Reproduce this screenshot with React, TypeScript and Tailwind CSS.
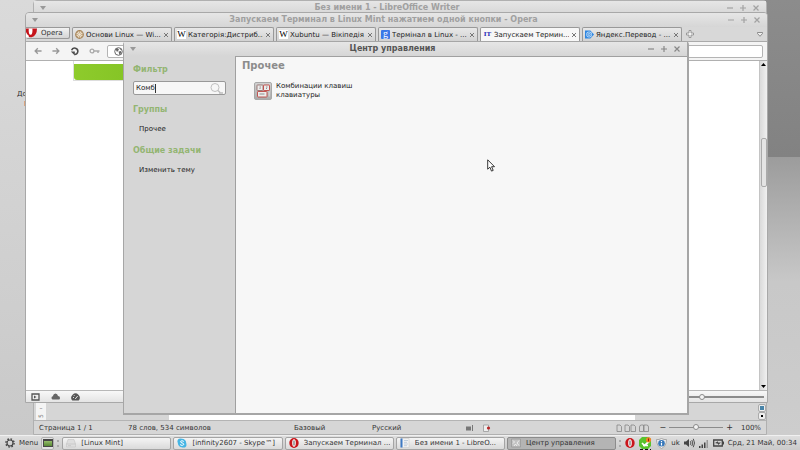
import React, { useState } from "react";

const thumb =
    "appearance-none bg-transparent [&::-webkit-slider-runnable-track]:bg-[#8c8c8c] [&::-webkit-slider-thumb]:appearance-none [&::-webkit-slider-thumb]:size-[6px] [&::-webkit-slider-thumb]:rounded-full [&::-webkit-slider-thumb]:border [&::-webkit-slider-thumb]:border-[#8a8a8a] [&::-webkit-slider-thumb]:bg-[#f4f4f4]";

const WikiIcon = () => (
    <span className="size-[9px] shrink-0 bg-white text-center font-['Liberation_Serif',serif] text-[9px] leading-[9px] text-black">W</span>
);

const GlobeIcon = () => (
    <svg viewBox="0 0 10 10" className="size-[9px] shrink-0">
        <circle cx="5" cy="5" r="4.2" fill="#e9dcc6" stroke="#a8865a" strokeWidth="1.4" />
        <path d="M5 1v8M1 5h8M2.2 2.2l5.6 5.6M7.8 2.2L2.2 7.8" stroke="#b59469" strokeWidth=".7" />
        <circle cx="5" cy="5" r="1.4" fill="#f1e8d8" />
    </svg>
);

const GoogleIcon = () => (
    <span className="size-[9px] shrink-0 rounded-[1px] bg-[#3b78e7] text-center font-['Liberation_Serif',serif] text-[10px] leading-[7px] text-white">g</span>
);

const ItIcon = () => (
    <span className="w-[9px] shrink-0 text-center font-['Liberation_Serif',serif] text-[7px] leading-[9px] font-bold text-[#2222b4]">IT</span>
);

const YandexIcon = () => (
    <svg viewBox="0 0 10 10" className="size-[9px] shrink-0">
        <path d="M0 .5h6L10 5 6 9.5H0z" fill="#2f86e0" />
        <circle cx="4.6" cy="5" r="3.2" fill="#bcdcf8" />
        <circle cx="4.6" cy="5" r="2" fill="none" stroke="#3a8be0" strokeWidth=".9" />
        <circle cx="4.6" cy="5" r=".7" fill="#3a8be0" />
    </svg>
);

const OperaIcon = () => (
    <svg viewBox="0 0 10 10" className="size-[10px] shrink-0">
        <ellipse cx="5" cy="5" rx="4.7" ry="4.9" fill="#c9151b" />
        <ellipse cx="5" cy="5" rx="1.8" ry="3.7" fill="#fff" />
        <path d="M4.5 2.5h1v5h-1z" fill="#555" />
    </svg>
);

const DriveIcon = () => (
    <svg viewBox="0 0 10 10" className="size-[10px] shrink-0">
        <path d="M2 1.5h6L9.5 6v3h-9V6z" fill="#dedede" stroke="#c4c4c4" strokeWidth=".6" />
        <path d="M.5 6h9M2 7.6h3" stroke="#bcbcbc" strokeWidth=".6" />
    </svg>
);

const SkypeIcon = () => (
    <svg viewBox="0 0 10 10" className="size-[10px] shrink-0">
        <circle cx="3.3" cy="3.3" r="2.8" fill="#45b5e4" />
        <circle cx="6.7" cy="6.7" r="2.8" fill="#45b5e4" />
        <circle cx="5" cy="5" r="4.2" fill="#45b5e4" />
        <path d="M6.8 3.5C6 2.5 3.5 2.5 3.5 3.8S6.8 4.8 6.8 6.2 4 7.8 3.1 6.5" fill="none" stroke="#fff" strokeWidth="1" />
    </svg>
);

const WriterIcon = () => (
    <svg viewBox="0 0 10 10" className="size-[10px] shrink-0">
        <path d="M1 .5h8v9H1z" fill="#f2f2f2" stroke="#c4c4c4" strokeWidth=".5" />
        <path d="M.5.5h2v9h-2z" fill="#3d79c4" />
        <path d="M4 2.5h4M4 4.3h3M4 6h4M4 7.7h3" stroke="#9db4cc" strokeWidth=".6" />
    </svg>
);

const CenterIcon = () => (
    <svg viewBox="0 0 10 10" className="size-[10px] shrink-0">
        <path d="M.5 1h9v8h-9z" fill="#c2c2c2" stroke="#979797" strokeWidth=".7" />
        <path d="M2 2.5l1.5 1.5L2 5.5M8 2.5L6 5l2 2.5M3 8l1.5-2L6 8" fill="none" stroke="#f2f2f2" strokeWidth=".9" />
    </svg>
);

const KeyboardIcon = () => (
    <svg viewBox="0 0 18 18" className="size-[18px] shrink-0">
        <defs>
            <linearGradient id="kb" x1="0" y1="0" x2="0" y2="1">
                <stop offset="0" stopColor="#d2d2d2" />
                <stop offset="1" stopColor="#aaa" />
            </linearGradient>
        </defs>
        <rect x=".5" y=".5" width="17" height="17" rx="1.5" fill="url(#kb)" stroke="#a8a8a8" />
        <g fill="#ededed" strokeWidth=".9">
            <rect x="3" y="3" width="6" height="5.5" rx=".6" stroke="#96706e" />
            <rect x="9.5" y="3" width="6" height="5.5" rx=".6" stroke="#bd4542" />
            <rect x="3.5" y="9.5" width="9.5" height="5.5" rx=".6" stroke="#bd4542" />
        </g>
        <path d="M5.5 5h1.5M5.5 6.5h1M12 5h1.5M12 6.5h1M5.5 12h5" stroke="#777" strokeWidth=".8" />
        <path d="M15.2 9.5v5" stroke="#d9d9d9" />
    </svg>
);

const TitleBar = ({ title, active }: { title: string; active?: boolean }) => (
    <header className={`flex h-[14px] shrink-0 items-center bg-linear-to-b from-[#e6e6e6] to-[#d6d6d6] px-[6px] text-[8px] leading-[12px] font-bold ${active ? "text-[#555]" : "text-[#a0a0a0]"}`}>
        <button aria-label="Меню окна" className="flex w-[8px] shrink-0">
            <svg viewBox="0 0 6 4" className="h-[4px] w-[6px]"><path d="M0 0h6L3 4z" fill="#999" /></svg>
        </button>
        <h1 className="flex-1 truncate text-center">{title}</h1>
        <div className="flex shrink-0 gap-[5px]">
            {["M1 4h6", "M1 4h6M4 1v6", "M1.5 1.5l5 5M6.5 1.5l-5 5"].map((d, i) => (
                <button key={d} aria-label={["Свернуть", "Развернуть", "Закрыть"][i]} className="size-[8px]">
                    <svg viewBox="0 0 8 8" className="size-[8px]"><path d={d} stroke={active ? "#888" : "#a2a2a2"} strokeWidth="1.2" /></svg>
                </button>
            ))}
        </div>
    </header>
);

const tabs = [
    { title: "Основи Linux — Wi...", icon: <GlobeIcon /> },
    { title: "Категорія:Дистриб...", icon: <WikiIcon /> },
    { title: "Xubuntu — Вікіпедія", icon: <WikiIcon /> },
    { title: "Термінал в Linux - ...", icon: <GoogleIcon /> },
    { title: "Запускаем Термин...", icon: <ItIcon />, active: true },
    { title: "Яндекс.Перевод - ...", icon: <YandexIcon /> },
];

const tasks = [
    { title: "[Linux Mint]", icon: <DriveIcon /> },
    { title: "[infinity2607 - Skype™]", icon: <SkypeIcon /> },
    { title: "Запускаем Терминал ...", icon: <OperaIcon /> },
    { title: "Без имени 1 - LibreO...", icon: <WriterIcon /> },
    { title: "Центр управления", icon: <CenterIcon />, active: true },
];

const WriterWindow = () => (
    <section className="absolute top-0 right-[33px] bottom-0 left-[33px] flex flex-col rounded-t-[4px] border border-[#b0b0b0] bg-[#d6d6d6]">
        <TitleBar title="Без имени 1 - LibreOffice Writer" />
        <div className="flex flex-1 pl-[2px]">
            <div className="flex w-[10px] flex-col items-center justify-end bg-[#f4f4f4] text-[6px] leading-[8px] text-[#666]">
                <span>–</span>
                <span className="h-[8px] -rotate-90">5</span>
            </div>
            <div className="flex flex-1 justify-center">
                <div className="w-[466px] bg-white" />
            </div>
            <div className="flex w-[8px] flex-col items-center justify-end">
                <button aria-label="Навигация" className="flex size-[8px] items-center justify-center rounded-[2px] border border-[#aaa] bg-[#eee]"><span className="size-[4px] bg-[#4984a8]" /></button>
                <button aria-label="Следующая страница" className="flex size-[8px] items-center justify-center rounded-[2px] border border-[#aaa] bg-[#eee]"><span className="size-[2px] bg-black" /></button>
            </div>
        </div>
        <footer className="flex h-[14px] shrink-0 items-center border-t border-[#b4b4b4] pr-[5px] pl-[5px] text-[7px] leading-[10px] text-[#333]">
            <span className="w-[89px] shrink-0">Страница 1 / 1</span>
            <span className="w-[166px] shrink-0">78 слов, 534 символов</span>
            <span className="w-[78px] shrink-0">Базовый</span>
            <span className="flex-1">Русский</span>
            <svg viewBox="0 0 26 8" className="mr-[125px] h-[8px] w-[26px] shrink-0">
                <path d="M1 2.5h5v4H1zM7 1h1v6H7z" fill="#777" />
                <path d="M18.5 1h5v6.5h-5z" fill="#eee" stroke="#999" strokeWidth=".8" />
                <circle cx="23.5" cy="4" r="1.6" fill="#b82828" />
            </svg>
            <svg viewBox="0 0 34 8" className="mr-[10px] h-[8px] w-[34px] shrink-0" fill="none" stroke="#858585" strokeWidth=".8">
                <path d="M1 1h3l1.500 1.500v5H1zM9 1h3l1.500 1.500v5H9zM15 1h3l1.500 1.500v5H15zM23.500 7.500V3q0-2 2-2h2v6.500zM28 1h2.500Q32.500 1 32.500 3v4.500H28z" />
            </svg>
            <button aria-label="Уменьшить" className="text-[8px]">−</button>
            <input type="range" aria-label="Масштаб" defaultValue={50} className={`${thumb} mx-[3px] h-[8px] w-[54px] [&::-webkit-slider-runnable-track]:h-px [&::-webkit-slider-thumb]:-mt-[3px]`} />
            <button aria-label="Увеличить" className="text-[8px]">+</button>
            <span className="ml-[8px]">100%</span>
        </footer>
    </section>
);

const OperaWindow = () => (
    <section className="absolute top-[12px] right-[32px] bottom-[32px] left-[25px] flex flex-col overflow-hidden rounded-t-[4px] border border-[#a8a8a8] bg-[#d6d6d6]">
        <TitleBar title="Запускаем Терминал в Linux Mint нажатием одной кнопки - Opera" />
        <nav className="flex h-[15px] shrink-0 items-end gap-[2px] border-b border-[#aaa] bg-[#d8d8d8]">
            <button className="flex h-[12px] w-[44px] shrink-0 items-center gap-[4px] self-start rounded-b-[2px] border border-l-0 border-[#999] bg-linear-to-b from-[#f2f2f2] to-[#d4d4d4] text-[7px] leading-[10px] text-[#333]">
                <svg viewBox="0 0 12 10" className="h-[10px] w-[11px] shrink-0">
                    <path d="M0 0h12q0 8-6 9.500Q1 10 0 5z" fill="#c5131a" />
                    <path d="M3 0h4q.5 7-2 7T3 0M0 4q1 3 3 4v2H0z" fill="#fff" />
                </svg>
                Opera
            </button>
            {tabs.map((tab) => (
                <div key={tab.title} className={`flex h-[14px] max-w-[100px] min-w-0 flex-1 items-center gap-[2px] rounded-t-[2px] border border-b-0 border-[#999] px-[2px] text-[7px] leading-[10px] text-[#222] ${tab.active ? "bg-[#f7f7f7]" : "bg-linear-to-b from-[#e8e8e8] to-[#d2d2d2]"}`}>
                    {tab.icon}
                    <button className="min-w-0 flex-1 overflow-hidden text-left whitespace-nowrap">{tab.title}</button>
                    <button aria-label="Закрыть вкладку" className="size-[6px] shrink-0">
                        <svg viewBox="0 0 6 6" className="size-[6px]"><path d="M1 1l4 4M5 1L1 5" stroke="#777" strokeWidth="1" /></svg>
                    </button>
                </div>
            ))}
            <button aria-label="Новая вкладка" className="mb-[3px] ml-[2px] size-[8px] shrink-0">
                <svg viewBox="0 0 8 8" className="size-[8px]"><path d="M3 .5h2V3h2.500v2H5v2.500H3V5H.5V3H3z" fill="#f4f4f4" stroke="#888" strokeWidth=".8" /></svg>
            </button>
            <button aria-label="Закрытые вкладки" className="mr-[4px] mb-[4px] ml-auto h-[5px] w-[6px] shrink-0">
                <svg viewBox="0 0 6 5" className="h-[5px] w-[6px]"><path d="M.5.5h5v1L3 4.300.5 1.500z" fill="#eee" stroke="#777" strokeWidth=".8" /></svg>
            </button>
        </nav>
        <div className="flex h-[19px] shrink-0 items-center gap-[10px] border-b border-[#b0b0b0] bg-[#f4f4f4] pr-[4px] pl-[8px]">
            <button aria-label="Назад"><svg viewBox="0 0 9 8" className="h-[8px] w-[8px]"><path d="M8.500 4H1.500M4.300 1L1.300 4l3 3" fill="none" stroke="#999" strokeWidth="1.500" /></svg></button>
            <button aria-label="Вперёд"><svg viewBox="0 0 9 8" className="h-[8px] w-[8px]"><path d="M.5 4h7M4.700 1l3 3-3 3" fill="none" stroke="#999" strokeWidth="1.500" /></svg></button>
            <button aria-label="Обновить"><svg viewBox="0 0 9 9" className="size-[9px]"><path d="M1.600 3.200A3.200 3.200 0 1 1 4.500 7.500" fill="none" stroke="#4c4c4c" strokeWidth="1.600" /><path d="M.8 4.600h4v4z" fill="#4c4c4c" /></svg></button>
            <button aria-label="Пароли"><svg viewBox="0 0 11 6" className="h-[6px] w-[11px]"><path d="M5 3h5.500M9 3v2" stroke="#aaa" strokeWidth="1.500" /><circle cx="3" cy="3" r="1.900" fill="none" stroke="#aaa" strokeWidth="1.300" /></svg></button>
            <label className="-ml-[3px] flex h-[13px] flex-1 items-center rounded-[2px] border border-[#b4b4b4] bg-white pl-[6px]">
                <svg viewBox="0 0 9 9" className="size-[9px] shrink-0"><circle cx="4.500" cy="4.500" r="3.800" fill="#fff" stroke="#666" /><path d="M1.500 2l2-.8L5 2.500 4 4l-1 1zM4.500 4.500L7 4l.5 1.500L5.500 8zM6 1.500L8 3H6.500z" fill="#666" /></svg>
                <input aria-label="Адрес" className="min-w-0 flex-1 text-[7px] outline-none" />
            </label>
        </div>
        <div className="flex min-h-0 flex-1 bg-white">
            <div className="flex-1 pl-[47px]">
                <div className="h-[20px] w-[200px] border-b border-l border-[#ddd] pt-[3px]">
                    <div className="h-[16px] rounded-b-[3px] bg-linear-to-r from-[#8ecb2c] to-[#6db310]" />
                </div>
            </div>
            <div className="flex w-[8px] flex-col items-center justify-between border-l border-[#c4c4c4] bg-linear-to-r from-[#dadada] to-[#f0f0f0] py-[2px]">
                <svg viewBox="0 0 5 3" className="h-[3px] w-[5px]"><path d="M0 3h5L2.500 0z" /></svg>
                <div className="mb-[126px] h-[49px] w-[6px] rounded-[2px] border border-[#aaa] bg-[#e4e4e4]" />
                <svg viewBox="0 0 5 3" className="h-[3px] w-[5px]"><path d="M0 0h5L2.500 3z" /></svg>
            </div>
        </div>
        <footer className="flex h-[12px] shrink-0 items-center gap-[11px] border-t border-[#b8b8b8] bg-linear-to-b from-[#f8f8f8] to-[#e4e4e4] pr-[3px] pl-[5px]">
            <button aria-label="Панели"><svg viewBox="0 0 9 8" className="h-[8px] w-[9px]"><path d="M1 1h7v6H1z" fill="none" stroke="#555" strokeWidth="1.300" /><path d="M3 2.500v3L5.500 4z" fill="#555" /></svg></button>
            <button aria-label="Облако"><svg viewBox="0 0 9 7" className="h-[7px] w-[9px]"><path d="M1.500 6.500a1.700 1.700 0 0 1 .3-3.200Q2.500.500 4.500.500t2.500 2.500q2 .2 2 2t-1.500 1.500z" fill="#666" /></svg></button>
            <button aria-label="Турбо"><svg viewBox="0 0 9 8" className="h-[8px] w-[9px]"><path d="M1.300 7.500A4.200 4.200 0 1 1 7.700 7.500z" fill="#555" /><path d="M4.200 6l2.500-3M2 4.500h1M3 2.200l.5.800" stroke="#eee" strokeWidth=".9" /></svg></button>
            <input type="range" aria-label="Масштаб страницы" defaultValue={15} className={`${thumb} ml-auto h-[8px] w-[76px] [&::-webkit-slider-runnable-track]:h-[2px] [&::-webkit-slider-thumb]:-mt-[2px]`} />
        </footer>
    </section>
);

const ControlCenter = () => {
    const [filter, setFilter] = useState("Комб");

    return (
        <section className="absolute top-[41px] right-[111px] bottom-[20px] left-[123px] flex flex-col rounded-t-[4px] border border-r-2 border-b-2 border-[#a6a6a6] bg-[#d6d6d6] text-[#222]">
            <TitleBar title="Центр управления" active />
            <div className="flex min-h-0 flex-1">
                <aside className="w-[111px] shrink-0 pt-[8px] pl-[9px]">
                    <label htmlFor="filter" className="block text-[8px] leading-[12px] font-bold text-[#93b572]">Фильтр</label>
                    <div className="mt-[5px] flex h-[14px] w-[93px] items-center rounded-[2px] border border-[#999] bg-[#f7f7f7] px-[2px]">
                        <input
                            id="filter"
                            value={filter}
                            onChange={(e) => setFilter(e.target.value)}
                            className="field-sizing-content text-[7px] leading-[10px] outline-none"
                        />
                        <span className="h-[9px] w-px bg-[#333]" />
                        <svg viewBox="0 0 13 11" className="ml-auto h-[11px] w-[13px]" fill="none" stroke="#c0c0c0">
                            <circle cx="5" cy="4.500" r="4" />
                            <path d="M8 7.500l2.500 2.500M9 10h4" strokeWidth="1.400" />
                        </svg>
                    </div>
                    <h2 className="mt-[9px] text-[8px] leading-[12px] font-bold text-[#93b572]">Группы</h2>
                    <button className="mt-[8px] ml-[6px] block text-[7px] leading-[10px]">Прочее</button>
                    <h2 className="mt-[11px] text-[8px] leading-[12px] font-bold text-[#93b572]">Общие задачи</h2>
                    <button className="mt-[8px] ml-[6px] block text-[7px] leading-[10px]">Изменить тему</button>
                </aside>
                <main className="flex-1 border-t border-l border-[#a0a0a0] bg-[#f7f7f7] px-[6px] pt-[2px]">
                    <h2 className="text-[10px] leading-[14px] font-bold text-[#8c8c8c]">Прочее</h2>
                    <button className="mt-[9px] ml-[12px] flex items-center gap-[4px] text-left text-[7px] leading-[9px]">
                        <KeyboardIcon />
                        <span className="w-[90px]">Комбинации клавиш клавиатуры</span>
                    </button>
                </main>
            </div>
        </section>
    );
};

const Taskbar = () => (
    <footer className="flex h-[15px] shrink-0 items-center border-t border-[#f0f0f0] bg-linear-to-b from-[#dedede] to-[#cacaca] pr-[3px] pl-[5px] text-[7px] leading-[10px] text-[#333]">
        <button className="flex shrink-0 items-center gap-[4px]">
            <svg viewBox="0 0 10 10" className="size-[10px]" fill="none" stroke="#444">
                <circle cx="5" cy="5" r="3" strokeWidth="1.200" />
                <circle cx="5" cy="5" r="4.100" strokeWidth="1.400" strokeDasharray="1.600 1.620" />
            </svg>
            Menu
        </button>
        <button aria-label="Свернуть все окна" className="ml-[3px] flex size-[13px] shrink-0 items-center justify-center rounded-[2px] border border-[#b0b0b0] bg-[#e2e2e2]">
            <span className="h-[8px] w-[10px] border border-t-2 border-[#474747] bg-linear-to-b from-[#95bd6a] to-[#588a34]" />
        </button>
        <span className="mx-[3px] h-[7px] w-[2px] shrink-0 border-l-2 border-dotted border-[#aaa]" />
        <div className="flex min-w-0 flex-1 gap-[2px]">
            {tasks.map((task) => (
                <button key={task.title} className={`flex h-[13px] min-w-0 flex-1 items-center gap-[5px] rounded-[2px] border px-[3px] ${task.active ? "border-[#8c8c8c] bg-[#b4b4b4]" : "border-[#a4a4a4] bg-linear-to-b from-[#f4f4f4] to-[#dadada]"}`}>
                    {task.icon}
                    <span className="overflow-hidden whitespace-nowrap">{task.title}</span>
                </button>
            ))}
        </div>
        <div className="ml-[3px] flex shrink-0 items-center gap-[4px]">
            <span className="h-[7px] w-[2px] border-l-2 border-dotted border-[#aaa]" />
            <OperaIcon />
            <svg viewBox="0 0 13 13" className="size-[13px] shrink-0">
                <path d="M3 0h5q4 0 4 4v5l-3 3H3L0 9V3z" fill="#59c32c" />
                <path d="M3 6l2.500 2.500L10 4.500M4 8.500h5" fill="none" stroke="#fff" strokeWidth="1.700" />
                <circle cx="9.500" cy="2.800" r="2.600" fill="#ef8524" />
                <path d="M9.500 1.500v2.800" stroke="#942010" />
                <path d="M1 12.500h11" stroke="#111" strokeDasharray="3 2" />
            </svg>
            <svg viewBox="0 0 11 11" className="size-[11px] shrink-0">
                <path d="M5.500.5Q8 2 10.500 1.500 10.500 8 5.500 10.500.5 8 .5 1.500 3 2 5.500.5z" fill="#eee" stroke="#999" strokeWidth=".8" />
                <circle cx="5.500" cy="5.300" r="3.300" fill="#3577ba" />
                <path d="M5.500 3v1M5.500 4.800v2.700" stroke="#fff" strokeWidth="1.200" />
            </svg>
            <span>uk</span>
            <svg viewBox="0 0 11 10" className="h-[10px] w-[11px] shrink-0">
                <path d="M0 3.500h2L5 1v8L2 6.500H0z" fill="#444" />
                <path d="M6.300 3.200q1.300 1.800 0 3.600M7.800 2q2 3 0 6M9.300.8q2.500 4.200 0 8.400" fill="none" stroke="#444" strokeWidth=".9" />
            </svg>
            <svg viewBox="0 0 10 9" className="h-[9px] w-[10px] shrink-0">
                <path d="M0 7h1.500v2H0zM2.500 5.500H4V9H2.500zM5 3.500h1.500V9H5z" fill="#444" />
                <path d="M7.500 1H9v8H7.500z" fill="#999" />
            </svg>
            <svg viewBox="0 0 11 8" className="h-[8px] w-[11px] shrink-0">
                <path d="M.7 1h8.600v6H.7z" fill="none" stroke="#444" strokeWidth="1.300" />
                <path d="M9.500 2.500H11v3H9.500zM2 4l3-1.800v1.300h3L5 6V4.700z" fill="#444" />
            </svg>
            <time>Срд, 21 Май, 00:34</time>
        </div>
    </footer>
);

const App = () => {
    return (
        <div className="flex h-screen flex-col overflow-hidden bg-[#d2d2d2] font-['DejaVu_Sans',sans-serif]">
            <div className="relative min-h-0 flex-1 bg-linear-to-b from-[#dadada] to-[#c9c9c9]">
                <div className="ml-auto flex h-full w-[60px] flex-col">
                    <div className="h-[36%] bg-linear-to-b from-[#8c8c8c] to-[#828282]" />
                    <div className="flex-1 bg-linear-to-b from-[#9c9c9c] via-[#c8c8c8] via-45% to-[#cdcdcd]" />
                </div>
                <div className="absolute top-[89px] left-[17px] text-[7px] leading-[10px] text-[#333]">
                    Документы
                    <span className="mt-[2px] ml-[7px] block h-[5px] w-[6px] bg-[#dba57f]" />
                </div>
                <WriterWindow />
                <OperaWindow />
                <ControlCenter />
                <svg viewBox="0 0 8 13" className="absolute top-[159px] left-[487px] h-[13px] w-[8px]">
                    <path d="M.7.8v9.400l2.200-2 1.600 3.900 1.700-.7L4.600 7.700h2.900z" fill="#fff" stroke="#222" strokeWidth=".9" />
                </svg>
            </div>
            <Taskbar />
        </div>
    );
};

export default App;
